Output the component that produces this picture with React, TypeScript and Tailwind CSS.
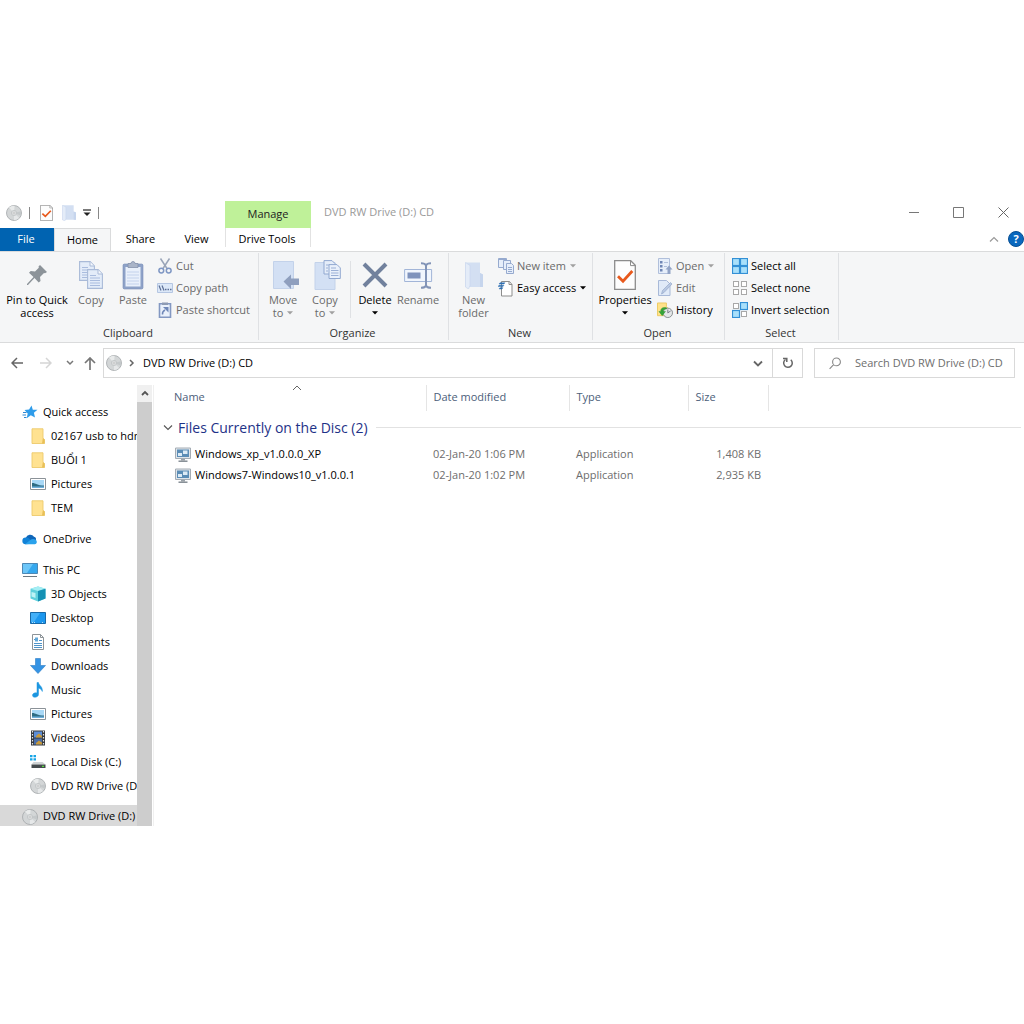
import React from "react";

type P = { className?: string };

const Disc = ({ size = 16 }: { size?: number }) => (
  <svg width={size} height={size} viewBox="0 0 16 16" aria-hidden="true">
    <circle cx="8" cy="8" r="7.5" fill="#d3d6d7" stroke="#a3a7a9" strokeWidth=".8" />
    <path d="M8 8 3 2.6A7.2 7.2 0 0 1 8.6.8Z" fill="#e9ebeb" />
    <path d="m8 8 5.2 5.1A7.2 7.2 0 0 1 8 15.2Z" fill="#e6e8e9" />
    <path d="M8 8 15 6.2A7 7 0 0 1 14.7 10.4Z" fill="#c4c8ca" />
    <circle cx="8" cy="8" r="2.6" fill="#e3e5e6" stroke="#b9bdbf" strokeWidth=".7" />
    <circle cx="8" cy="8" r="1" fill="#fff" stroke="#999" strokeWidth=".5" />
  </svg>
);

const CheckPage = ({ w, h }: { w: number; h: number }) => (
  <svg width={w} height={h} viewBox="0 0 22 30" preserveAspectRatio="none" aria-hidden="true">
    <path d="M.7.7h16l4.6 4.6v24H.7Z" fill="#fdfdfd" stroke="#8c8c8c" strokeWidth="1.3" />
    <path d="M16.5.8v4.8h4.8" fill="none" stroke="#8c8c8c" />
    <path d="m4 16.2 5 5L18.3 11" fill="none" stroke="#e8591c" strokeWidth="2.8" />
  </svg>
);

const PaleFolder = ({ w, h }: { w: number; h: number }) => (
  <svg width={w} height={h} viewBox="0 0 18 27" preserveAspectRatio="none" aria-hidden="true">
    <path d="M.5.5H15v10.500l3 1.500V25H.5Z" fill="#d3dff2" />
    <path d="M.5.5 5 3.500v20L3.500 27 .5 25Z" fill="#e4ecf8" stroke="#c6d4ec" strokeWidth=".6" />
    <path d="M15 11l3 1.500V25h-3Z" fill="#c6d5ed" />
  </svg>
);

const Pin = () => (
  <svg width="22" height="22" viewBox="0 0 22 22" aria-hidden="true">
    <path d="m14 1 7 7-2 1.200-1-.3-4 4 .5 4-1.800 1.500L8.500 14 2 21H1v-1l6.500-7L3 8.800 4.700 7l4.300.5 3.800-3.800-.3-1.200Z" fill="#8c9399" />
  </svg>
);

const paper = (x: number, y: number) => (
  <g transform={`translate(${x} ${y})`}>
    <path d="M.6.6h10.500L15.400 5v14.400H.6Z" fill="#e3ecf9" stroke="#a9bad8" strokeWidth="1.100" />
    <path d="M11 .8V5h4.200" fill="#f6f9fd" stroke="#a9bad8" />
    <path d="M3 6.500h6M3 9h10M3 11.500h10M3 14h10M3 16.500h10" stroke="#a9bcde" />
  </g>
);

const CopyIcon = () => (
  <svg width="26" height="30" viewBox="0 0 26 30" aria-hidden="true">
    {paper(1, 1)}
    {paper(9, 9)}
  </svg>
);

const PasteIcon = () => (
  <svg width="22" height="30" viewBox="0 0 22 30" aria-hidden="true">
    <rect x="1.200" y="4.200" width="19.600" height="24.600" rx="1" fill="#8ea2c8" stroke="#7c92bc" />
    <path d="M3.500 7h15v19.500h-15Z" fill="#e9f0fb" />
    <path d="M5 12h12M5 15h12M5 18h12M5 21h12M5 24h12" stroke="#c3d2ec" />
    <path d="M6 3.500h3a2 2 0 0 1 4 0h3v4H6Z" fill="#a9b4c8" stroke="#8592ac" strokeWidth=".8" />
  </svg>
);

const MoveTo = () => (
  <svg width="26" height="30" viewBox="0 0 26 30" aria-hidden="true">
    <path d="M.5 1.500h20v27H.5Z" fill="#d3e0f4" stroke="#c3d2ea" />
    <path d="m10.500 21.500 7.500-7v4h8v6.500h-8v4Z" fill="#8f9fbe" />
  </svg>
);

const CopyTo = () => (
  <svg width="27" height="31" viewBox="0 0 27 31" aria-hidden="true">
    <path d="M1 2.500h20v27H1Z" fill="#d3e0f4" stroke="#c3d2ea" />
    <path d="M10 .6h8l3 3V14H10Z" fill="#e5edf9" stroke="#91a8d0" />
    <path d="M15 4.600h8l3.300 3.300V18.500H15Z" fill="#e9f0fb" stroke="#91a8d0" />
    <path d="M12 5h3M12 8h2M12 11h2M17 8h5M17 10.500h7.500M17 13h7.500M17 15.500h7.500" stroke="#9bb0d6" />
  </svg>
);

const DeleteIcon = () => (
  <svg width="26" height="26" viewBox="0 0 26 26" aria-hidden="true">
    <path d="m2 2 22 22M24 2 2 24" stroke="#71819d" strokeWidth="4" />
  </svg>
);

const RenameIcon = () => (
  <svg width="29" height="27" viewBox="0 0 29 27" aria-hidden="true">
    <path d="M.6 7.500h27v12H.6Z" fill="#f1f6fd" stroke="#a2b5d8" />
    <path d="M3.500 10.500h13v6h-13Z" fill="#7f93bc" />
    <path d="M17 1.300q4 0 5 2 1-2 5-2M22 3v21M17 25.700q4 0 5-2 1 2 5 2" fill="none" stroke="#8294b7" strokeWidth="2" />
  </svg>
);

const Cut = () => (
  <svg width="16" height="16" viewBox="0 0 16 16" aria-hidden="true">
    <path d="m3.500.5 6.500 10M12.500.5l-6.500 10" stroke="#9aa5b8" strokeWidth="1.500" />
    <circle cx="4.300" cy="12.600" r="2.400" fill="none" stroke="#7f97c4" strokeWidth="1.500" />
    <circle cx="11.700" cy="12.600" r="2.400" fill="none" stroke="#7f97c4" strokeWidth="1.500" />
  </svg>
);

const CopyPath = () => (
  <svg width="16" height="16" viewBox="0 0 16 16" aria-hidden="true">
    <path d="M.5 3.500h15v9H.5Z" fill="#dce8f8" stroke="#b5c6e2" />
    <path d="m2 5.500 2 5M5 5.500l2 5" stroke="#5c6f96" strokeWidth="1.200" />
    <path d="M8 9.500h1.500M10.500 9.500H12M13 9.500h1.500" stroke="#5c6f96" strokeWidth="1.500" />
  </svg>
);

const PasteShortcut = () => (
  <svg width="16" height="16" viewBox="0 0 16 16" aria-hidden="true">
    <path d="M2.500 1.800h11v13.500h-11Z" fill="#eaf1fb" stroke="#8398c2" strokeWidth="1.600" />
    <path d="M5 .5h6V3H5Z" fill="#8e9bb3" />
    <path d="M5.500 12.500c-.3-2.500.5-3.500 2.500-4.500" fill="none" stroke="#6f87b8" strokeWidth="1.500" />
    <path d="M6 5h5.500v5.500Z" fill="#6f87b8" />
  </svg>
);

const NewItem = () => (
  <svg width="16" height="16" viewBox="0 0 16 16" aria-hidden="true">
    <g fill="#e6eefa" stroke="#96aacf">
      <path d="M.5.5h8v9h-8Z" />
      <path d="M5.500 2.500h7v9h-7Z" />
      <path d="M8.500 5.500h5l2 2v8h-7Z" />
    </g>
    <path d="M.5 1.500h8M10 9.500h4M10 11.500h4M10 13.500h4" stroke="#96aacf" />
  </svg>
);

const EasyAccess = () => (
  <svg width="16" height="17" viewBox="0 0 16 17" aria-hidden="true">
    <path d="M3.500 1.500h8l2.500 3v11.500H3.500Z" fill="#fff" stroke="#8d8d8d" />
    <path d="M11 1.500v3h3" fill="none" stroke="#8d8d8d" />
    <path d="M2 2.700h5L6 4H1ZM1 5.200h5L5 6.500H0ZM2 7.700h3L4 9H1Z" fill="#2d6fb3" stroke="#2d6fb3" strokeWidth=".4" />
  </svg>
);

const OpenIcon = () => (
  <svg width="16" height="16" viewBox="0 0 16 16" aria-hidden="true">
    <path d="M1.500.5h11v15h-11Z" fill="#e6eefa" stroke="#b0bfdb" />
    <path d="M3 3h2.500v2.500H3ZM3 7h2.500v2.500H3ZM3 11h2.500v2.500H3Z" fill="#6f86b5" />
    <path d="M7 4.500h4M7 8.500h3" stroke="#b0bfdb" />
    <path d="m8.500 11.500 3.500-4 3.500 4h-2V16h-3v-4.500Z" fill="#91a3c6" />
  </svg>
);

const EditIcon = () => (
  <svg width="16" height="16" viewBox="0 0 16 16" aria-hidden="true">
    <path d="M1.500.5h8l3.500 3.500v11.500H1.500Z" fill="#e0eaf8" stroke="#a8b9d8" />
    <path d="m4.500 14 1-3.500 8-8 1.500 1.500L7 12.500Z" fill="#b8c8e2" stroke="#96a9cc" strokeWidth=".7" />
  </svg>
);

const HistoryIcon = () => (
  <svg width="17" height="17" viewBox="0 0 17 17" aria-hidden="true">
    <path d="M.5.5H10v4l1.500 1.500v8H.5Z" fill="#ffe28a" stroke="#ecc95f" />
    <circle cx="11.500" cy="11" r="5" fill="#e4e7e8" stroke="#858b8e" />
    <path d="M11.500 7.500V11l3-2" fill="none" stroke="#667" strokeWidth=".9" />
    <path d="M10 5.500c-4-1-6.500 1-6 4H2l3.500 4.500L9 9.500H6.500C6.500 7.500 8 6.500 10 7Z" fill="#35a538" stroke="#218a2c" strokeWidth=".4" />
  </svg>
);

const SelectIcon = ({ on }: { on: boolean[] }) => (
  <svg width="16" height="16" viewBox="0 0 16 16" aria-hidden="true">
    {on.map((v, i) => {
      const x = (i % 2) * 8;
      const y = i > 1 ? 8 : 0;
      return v ? (
        <rect key={i} x={x + 0.5} y={y + 0.5} width="7" height="7" fill="#a9e0fb" stroke="#3390d6" strokeWidth="1.200" />
      ) : (
        <rect key={i} x={x + 1.5} y={y + 1.5} width="5" height="5" fill="#fff" stroke="#a8a8a8" />
      );
    })}
  </svg>
);

const Star = () => (
  <svg width="16" height="16" viewBox="0 0 16 16" aria-hidden="true">
    <path d="m9.500 1.500 1.300 4.200 4.700.1-3.600 3 1.100 4.700-4.200-2.200-4.100 2.900 1-4.800L2.500 6l4.600-.5Z" fill="#2e9cea" />
    <path d="M1 8.500h3.500M.5 11H4M2 13.500h2.500" stroke="#2e86d0" />
  </svg>
);

const Folder = () => (
  <svg width="16" height="16" viewBox="0 0 16 16" aria-hidden="true">
    <path d="M2 .8h11v9.500l1.500 1.200v4H2Z" fill="#ffe291" stroke="#edca6b" strokeWidth=".9" />
    <path d="m12 15.500.8-5.200 1.700 1v4.200Z" fill="#e8bf58" />
  </svg>
);

const Picture = () => (
  <svg width="16" height="16" viewBox="0 0 16 16" aria-hidden="true">
    <path d="M.5 2.500h15v11H.5Z" fill="#fff" stroke="#8b9298" />
    <path d="M2 4h12v8H2Z" fill="#a8d8f6" />
    <path d="M2 7c3-.5 5 2.500 12 2.500V11H2Z" fill="#2e6c84" />
    <path d="M2 10.500h12V12H2Z" fill="#6fb0dc" />
  </svg>
);

const Cloud = () => (
  <svg width="16" height="16" viewBox="0 0 16 16" aria-hidden="true">
    <path d="M3.800 7A4.600 4.600 0 0 1 12 5.800c2 .4 2.200 2 2 3L8 12Z" fill="#0f66b9" />
    <path d="M3.500 13.200a3.300 3.300 0 0 1 .3-6.600c1.700-.2 2.700.5 3.700 1.300l6.500 4.500Z" fill="#1282d7" />
    <path d="M3 13.200 8 9.300c2-1.500 4-1.500 5.500-.5a2.400 2.400 0 0 1-.5 4.500Z" fill="#2aa2ec" />
  </svg>
);

const Pc = () => (
  <svg width="16" height="16" viewBox="0 0 16 16" aria-hidden="true">
    <path d="M.5 1.500h15v10H.5Z" fill="#35a8ee" stroke="#4d88b5" />
    <path d="M1 2h10L5 11H1Z" fill="#6cc6f8" />
    <path d="M1 14.500h14" stroke="#6d7880" />
  </svg>
);

const Cube = () => (
  <svg width="16" height="16" viewBox="0 0 16 16" aria-hidden="true">
    <path d="m8 .5 7.500 2.300v9.700L8 15.500.5 12.500V2.800Z" fill="#5fd0dc" />
    <path d="M8 .5 15.500 2.800 8 5 .5 2.800Z" fill="#a5eef4" />
    <path d="M8 5l7.500-2.200v9.700L8 15.500Z" fill="#1591b4" />
    <path d="m1.500 6 4 1v5l-4-1.500Z" fill="#bdf3f5" />
  </svg>
);

const Desktop = () => (
  <svg width="16" height="16" viewBox="0 0 16 16" aria-hidden="true">
    <path d="M.5 2.500h15v11H.5Z" fill="#1c97ee" stroke="#1769a8" />
    <path d="M1 3h9L4 12H1Z" fill="#43b0f8" />
    <path d="M2 12.500h3M12 12.500h2" stroke="#b5ddf6" strokeDasharray="1 1" />
  </svg>
);

const Doc = () => (
  <svg width="16" height="16" viewBox="0 0 16 16" aria-hidden="true">
    <path d="M2.500.5h8l3 3v12h-11Z" fill="#fff" stroke="#8d9499" />
    <path d="M10.500.5v3h3" fill="none" stroke="#8d9499" />
    <path d="M4 5.500h4M9 6.500h3M4 9.500h8M4 11.500h8M4 13.500h8" stroke="#4f94c9" />
    <path d="M5 3.500h3v4H5Z" fill="#63a8d8" />
  </svg>
);

const Down = () => (
  <svg width="16" height="16" viewBox="0 0 16 16" aria-hidden="true">
    <path d="M5.500.5h5V7.500h5L8 15.500.5 7.500h5Z" fill="#3493e4" stroke="#2c7cc5" strokeWidth=".6" />
  </svg>
);

const Music = () => (
  <svg width="16" height="16" viewBox="0 0 16 16" aria-hidden="true">
    <path d="M7 .5h1.500c.3 3 4.500 4 3.800 9-1-2.500-2.300-3-3.800-3.300v6.300c0 3-6 4-6 .8 0-2 2.500-3 4.500-2.300Z" fill="#1d96e0" stroke="#1d96e0" strokeWidth=".5" />
  </svg>
);

const Video = () => (
  <svg width="16" height="16" viewBox="0 0 16 16" aria-hidden="true">
    <path d="M1 .5h14v15H1Z" fill="#35383c" />
    <path d="M4 1.500h8v6H4Z" fill="#5c8ed8" />
    <path d="M4 8.500h8v6H4Z" fill="#4a6ea8" />
    <path d="m6 6 3-2.500L12 6v1.500H6ZM6 13l3-2.500 3 2v2H6Z" fill="#c99a3a" />
    <path d="M2.500 1v14M13.500 1v14" stroke="#e3e5e8" strokeWidth="1.200" strokeDasharray="1.500 1.500" />
  </svg>
);

const Disk = () => (
  <svg width="16" height="16" viewBox="0 0 16 16" aria-hidden="true">
    <path d="M0 1h2.500v2.200H0ZM3.500 1H6v2.200H3.500ZM0 4.200h2.500v2.200H0ZM3.500 4.200H6v2.200H3.500Z" fill="#17a5e6" />
    <path d="M3.500 8h9l3 2.500h-14Z" fill="#cfd3d5" />
    <path d="M1.500 10.500h14V14h-14Z" fill="#454b4e" />
    <path d="M12 12.300h2" stroke="#58e03c" strokeWidth="1.300" />
  </svg>
);

const AppIcon = () => (
  <svg width="16" height="16" viewBox="0 0 16 16" aria-hidden="true">
    <path d="M.5 1h15v10.500H.5Z" fill="#dfe5ea" stroke="#a5adb5" />
    <path d="M2 2.500h12v7.500H2Z" fill="#5b8db6" />
    <path d="M3 6h4v3H3ZM8 3.500h4.500v3.500H8Z" fill="#dcebf6" />
    <path d="M6 12h4v1.500H6Z" fill="#9aa2a9" />
    <path d="M3.500 14.200h9" stroke="#7c858d" strokeWidth="1.400" />
  </svg>
);

const Caret = ({ className = "" }: P) => (
  <svg className={className} width="6" height="4" viewBox="0 0 6 4" aria-hidden="true">
    <path d="M0 .3h6L3 3.600Z" fill="currentColor" />
  </svg>
);

const Chevron = ({ className = "", d = "m1 1.500 4 4 4-4", w = 10, h = 7, s = 1.5 }: P & { d?: string; w?: number; h?: number; s?: number }) => (
  <svg className={className} width={w} height={h} viewBox={`0 0 ${w} ${h}`} fill="none" stroke="currentColor" strokeWidth={s} aria-hidden="true">
    <path d={d} />
  </svg>
);

function Big({ icon, lines, caret, dim, className }: { icon: React.ReactNode; lines: string[]; caret?: boolean; dim?: boolean; className: string }) {
  return (
    <button className={`flex shrink-0 flex-col items-center leading-[13px] ${dim ? "text-[#6a6a6a]" : "text-black"} ${className}`}>
      <span className="flex h-10 items-center justify-center pt-1">{icon}</span>
      <span className="whitespace-nowrap">{lines[0]}</span>
      <span className="flex h-[13px] items-center gap-1 whitespace-nowrap">
        {lines[1]}
        {caret && <Caret className={dim ? "text-[#a0a0a0]" : "text-black"} />}
      </span>
    </button>
  );
}

function Small({ icon, label, caret, dim }: { icon: React.ReactNode; label: string; caret?: boolean; dim?: boolean }) {
  return (
    <button className={`flex h-[22px] items-center gap-[3px] whitespace-nowrap ${dim ? "text-[#6a6a6a]" : "text-black"}`}>
      <span className="flex w-4 justify-center">{icon}</span>
      {label}
      {caret && <Caret className={dim ? "ml-px text-[#a0a0a0]" : "ml-px"} />}
    </button>
  );
}

function Group({ label, className, children }: { label: string; className: string; children: React.ReactNode }) {
  return (
    <section aria-label={label} className={`flex shrink-0 flex-col border-r border-[#dfe1e4] ${className}`}>
      <div className="flex h-[73px] px-[3px]">{children}</div>
      <div className="pr-[2px] text-center leading-[14px] text-[#333]">{label}</div>
    </section>
  );
}

const Col = ({ children, className = "" }: { children: React.ReactNode; className?: string }) => (
  <div className={`flex flex-col items-start pt-[2px] ${className}`}>{children}</div>
);

type Node = { icon: React.ReactNode; label: string; top?: boolean; gap?: boolean; active?: boolean };
const tree: Node[] = [
  { icon: <Star />, label: "Quick access", top: true },
  { icon: <Folder />, label: "02167 usb to hdmi" },
  { icon: <Folder />, label: "BUỔI 1" },
  { icon: <Picture />, label: "Pictures" },
  { icon: <Folder />, label: "TEM" },
  { icon: <Cloud />, label: "OneDrive", top: true, gap: true },
  { icon: <Pc />, label: "This PC", top: true, gap: true },
  { icon: <Cube />, label: "3D Objects" },
  { icon: <Desktop />, label: "Desktop" },
  { icon: <Doc />, label: "Documents" },
  { icon: <Down />, label: "Downloads" },
  { icon: <Music />, label: "Music" },
  { icon: <Picture />, label: "Pictures" },
  { icon: <Video />, label: "Videos" },
  { icon: <Disk />, label: "Local Disk (C:)" },
  { icon: <Disc />, label: "DVD RW Drive (D:) CD" },
  { icon: <Disc />, label: "DVD RW Drive (D:) CD", top: true, gap: true, active: true },
];

const files = [
  { name: "Windows_xp_v1.0.0.0_XP", date: "02-Jan-20 1:06 PM", size: "1,408 KB" },
  { name: "Windows7-Windows10_v1.0.0.1", date: "02-Jan-20 1:02 PM", size: "2,935 KB" },
];

export default function App() {
  return (
    <div className="min-h-screen bg-white pt-[201px] font-['Open_Sans','Noto_Sans',sans-serif] text-[11px] text-black">
      <header className="flex">
        <div className="w-[225px] shrink-0">
          <div className="flex h-[27px] items-center pb-1 pl-[6px]">
            <Disc />
            <span className="ml-[7px] h-3 w-px bg-[#888]" />
            <button aria-label="Properties" className="ml-[10px]"><CheckPage w={13} h={16} /></button>
            <button aria-label="New folder" className="ml-[9px]"><PaleFolder w={14} h={16} /></button>
            <button aria-label="Customize Quick Access Toolbar" className="ml-[7px]">
              <svg width="8" height="8" viewBox="0 0 8 8"><path d="M0 1h8" stroke="#222" strokeWidth="1.200" /><path d="M.5 3.500h7L4 7Z" fill="#222" /></svg>
            </button>
            <span className="ml-[7px] h-3 w-px bg-[#888]" />
          </div>
          <nav className="flex h-[23px]">
            <button className="w-[54px] bg-[#0063b1] pr-[2px] text-white">File</button>
            <button className="w-[57px] border border-b-0 border-[#dadbdc] bg-[#f5f6f7]">Home</button>
            <button className="w-[59px]">Share</button>
            <button className="w-[53px]">View</button>
          </nav>
        </div>
        <div className="flex w-[86px] shrink-0 flex-col">
          <div className="flex h-[27px] items-center justify-center bg-[#bff199] text-[#222]">Manage</div>
          <button className="mb-1 h-[19px] whitespace-nowrap border-x border-[#e2e2e2] pr-[2px] pt-[3px]">Drive Tools</button>
        </div>
        <div className="flex min-w-0 flex-1 flex-col">
          <div className="flex h-[27px] items-center pb-1 pl-[13px] pr-[15px] text-[#999]">
            <h1 className="flex-1">DVD RW Drive (D:) CD</h1>
            <button aria-label="Minimize" className="mr-[34px]"><Chevron d="M0 5.500h10" h={11} s={1} className="text-[#777]" /></button>
            <button aria-label="Maximize" className="mr-[34px]"><Chevron d="M.5.500h10v10H.5Z" w={11} h={11} s={1} className="text-[#777]" /></button>
            <button aria-label="Close"><Chevron d="m.5.500 10 10m0-10-10 10" w={11} h={11} s={1} className="text-[#666]" /></button>
          </div>
          <div className="flex h-[23px] items-center justify-end gap-[9px] pb-px">
            <button aria-label="Minimize the Ribbon"><Chevron d="m1 5.500 4-4 4 4" s={1.2} className="text-[#999]" /></button>
            <button aria-label="Help" className="flex h-4 w-4 items-center justify-center rounded-full border border-[#084f93] bg-[#0a68be] font-bold text-white">?</button>
          </div>
        </div>
      </header>

      <div className="flex border-y border-[#dadbdc] bg-[#f5f6f7] pb-[2px] pt-px">
        <Group label="Clipboard" className="w-[259px]">
          <Big className="w-[68px]" icon={<Pin />} lines={["Pin to Quick", "access"]} />
          <Big className="w-10" dim icon={<CopyIcon />} lines={["Copy"]} />
          <Big className="w-11" dim icon={<PasteIcon />} lines={["Paste"]} />
          <Col className="pl-[2px]">
            <Small dim icon={<Cut />} label="Cut" />
            <Small dim icon={<CopyPath />} label="Copy path" />
            <Small dim icon={<PasteShortcut />} label="Paste shortcut" />
          </Col>
        </Group>
        <Group label="Organize" className="w-[190px]">
          <Big className="w-[42px]" dim caret icon={<span className="pl-[5px]"><MoveTo /></span>} lines={["Move", "to"]} />
          <Big className="w-[42px]" dim caret icon={<span className="pl-[5px]"><CopyTo /></span>} lines={["Copy", "to"]} />
          <span className="mx-1 my-2 w-px bg-[#dfe1e4]" />
          <Big className="w-10" caret icon={<DeleteIcon />} lines={["Delete"]} />
          <Big className="w-[46px]" dim icon={<RenameIcon />} lines={["Rename"]} />
        </Group>
        <Group label="New" className="w-[144px]">
          <Big className="w-[43px]" dim icon={<PaleFolder w={18} h={27} />} lines={["New", "folder"]} />
          <Col className="pl-[3px]">
            <Small dim caret icon={<NewItem />} label="New item" />
            <Small caret icon={<EasyAccess />} label="Easy access" />
          </Col>
        </Group>
        <Group label="Open" className="w-[132px]">
          <Big className="w-[58px]" caret icon={<CheckPage w={22} h={30} />} lines={["Properties"]} />
          <Col className="pl-[3px]">
            <Small dim caret icon={<OpenIcon />} label="Open" />
            <Small dim icon={<EditIcon />} label="Edit" />
            <Small icon={<HistoryIcon />} label="History" />
          </Col>
        </Group>
        <Group label="Select" className="w-[114px]">
          <Col className="pl-1">
            <Small icon={<SelectIcon on={[true, true, true, true]} />} label="Select all" />
            <Small icon={<SelectIcon on={[false, false, false, false]} />} label="Select none" />
            <Small icon={<SelectIcon on={[false, true, true, false]} />} label="Invert selection" />
          </Col>
        </Group>
      </div>

      <div className="flex items-center pb-[7px] pr-[9px] pt-[5px]">
        <div className="flex w-[103px] shrink-0 items-center pl-[11px]">
          <button aria-label="Back"><Chevron d="M12 6H1m5-5L1 6l5 5" w={12} h={12} className="text-[#666]" /></button>
          <button aria-label="Forward" className="ml-[17px]"><Chevron d="M0 6h11M6 1l5 5-5 5" w={12} h={12} className="text-[#d5d5d5]" /></button>
          <button aria-label="Recent locations" className="ml-[14px]"><Chevron d="m1 1 3 3 3-3" w={8} h={6} className="text-[#777]" /></button>
          <button aria-label="Up" className="ml-[10px]"><Chevron d="M6 13V1M1 6l5-5 5 5" w={12} h={13} s={1.7} className="text-[#777]" /></button>
        </div>
        <div className="flex h-[30px] min-w-0 flex-1 items-center border border-[#d9d9d9] pl-[2px]">
          <Disc />
          <Chevron d="m1 1 3 3-3 3" w={6} h={8} className="ml-[7px] text-[#666]" />
          <button className="ml-2 flex-1 text-left">DVD RW Drive (D:) CD</button>
          <button aria-label="Previous locations" className="mr-[9px]"><Chevron s={1.8} className="text-[#666]" /></button>
          <button aria-label="Refresh" className="flex h-full w-[30px] items-center justify-center border-l border-[#d9d9d9]">
            <svg width="12" height="12" viewBox="0 0 12 12" fill="none" stroke="#666" strokeWidth="1.500" aria-hidden="true">
              <path d="M8.800 2.800a4.300 4.300 0 1 1-5.300-.3" />
              <path d="M1 1.500h3.800V5" />
            </svg>
          </button>
        </div>
        <label className="ml-[11px] flex h-[30px] w-[201px] shrink-0 items-center border border-[#d9d9d9] pl-[14px]">
          <Chevron d="M7.500 1a3.900 3.900 0 1 1 0 7.800 3.900 3.900 0 0 1 0-7.800M4.600 7.600.6 11.800" w={13} h={13} s={1.1} className="shrink-0 text-[#888]" />
          <input aria-label="Search" placeholder="Search DVD RW Drive (D:) CD" className="ml-[13px] w-full min-w-0 outline-none placeholder:text-[#6d6d6d]" />
        </label>
      </div>

      <div className="flex">
        <aside className="flex w-[154px] shrink-0 border-r border-[#f0f0f0] pr-px">
          <ul className="w-[137px] overflow-hidden pt-[15px]">
            {tree.map((n, i) => (
              <li key={i} className={n.gap ? "mt-[7px]" : ""}>
                <a href="#" className={`flex items-center gap-[5px] whitespace-nowrap ${n.top ? "pl-[22px]" : "pl-[30px]"} ${n.active ? "h-[21px] bg-[#d9d9d9] pt-[2px]" : "h-6"}`}>
                  <span className="shrink-0">{n.icon}</span>
                  {n.label}
                </a>
              </li>
            ))}
          </ul>
          <div className="flex w-[15px] flex-col bg-[#cdcdcd]">
            <button aria-label="Scroll up" className="flex h-[17px] items-center justify-center bg-[#f0f0f0]"><Chevron d="m1 5 3-3 3 3" w={8} h={7} s={1.8} className="text-[#555]" /></button>
          </div>
        </aside>
        <main className="min-w-0 flex-1 pr-[3px]">
          <table className="w-full table-fixed border-collapse text-left">
            <colgroup>
              <col className="w-[272px]" />
              <col className="w-[143px]" />
              <col className="w-[119px]" />
              <col className="w-[80px]" />
              <col />
            </colgroup>
            <thead>
              <tr className="h-[26px] text-[#4c607a]">
                <th className="relative border-r border-[#e5e5e5] pb-px pl-5 font-normal">
                  Name
                  <Chevron d="m1 5 4-4 4 4" s={1} className="absolute left-[138px] top-0 text-[#666]" />
                </th>
                <th className="border-r border-[#e5e5e5] pb-px pl-[7px] font-normal">Date modified</th>
                <th className="border-r border-[#e5e5e5] pb-px pl-[7px] font-normal">Type</th>
                <th className="border-r border-[#e5e5e5] pb-px pl-[7px] font-normal">Size</th>
                <td />
              </tr>
            </thead>
            <tbody>
              <tr className="h-[33px]">
                <th colSpan={5} className="pl-[9px] font-normal">
                  <div className="flex items-center whitespace-nowrap text-[14px] text-[#1e3287]">
                    <Chevron s={1.1} className="text-[#555]" />
                    <span className="ml-[5px]">Files Currently on the Disc (2)</span>
                    <span className="ml-[8px] h-px flex-1 bg-[#e2e2e2]" />
                  </div>
                </th>
              </tr>
              {files.map((f) => (
                <tr key={f.name} className="h-[21px] text-[#6d6d6d]">
                  <td className="pl-[21px]">
                    <a href="#" className="flex items-center gap-1 text-black"><AppIcon />{f.name}</a>
                  </td>
                  <td className="pl-[7px]">{f.date}</td>
                  <td className="pl-[7px]">Application</td>
                  <td className="pr-[7px] text-right">{f.size}</td>
                  <td />
                </tr>
              ))}
            </tbody>
          </table>
        </main>
      </div>
    </div>
  );
}
